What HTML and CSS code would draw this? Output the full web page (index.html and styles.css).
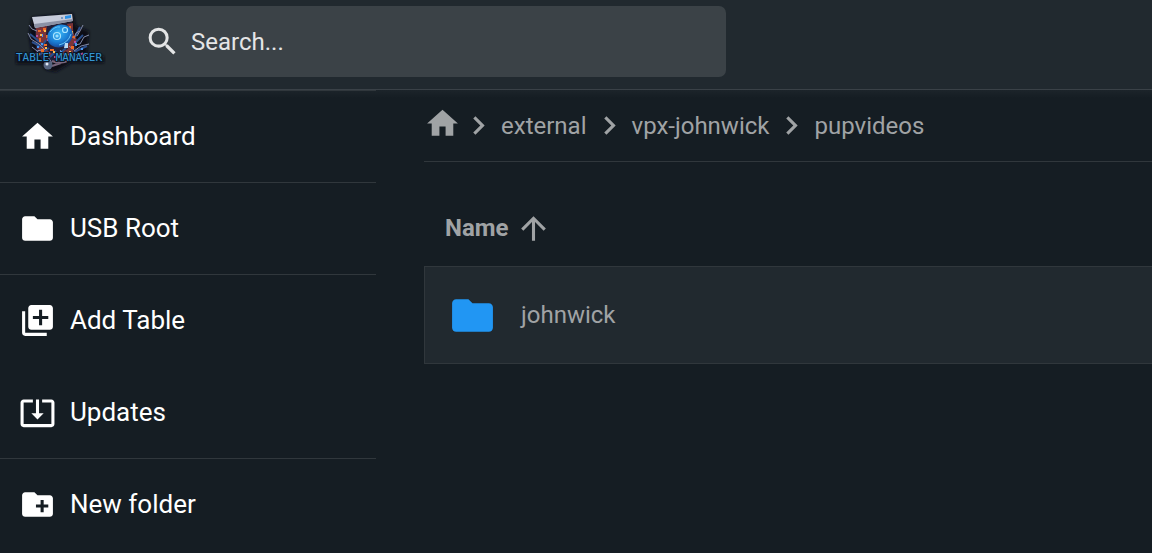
FILE: index.html
```html
<!DOCTYPE html>
<html lang="en">
<head>
<meta charset="utf-8">
<meta name="viewport" content="width=device-width, initial-scale=1">
<title>Table Manager</title>
<link rel="stylesheet" href="styles.css">
</head>
<body>
<header class="topbar">
  <a class="logo-link" href="#" aria-label="Table Manager">
    <svg class="logo" viewBox="0 0 92 64">
      <defs>
        <radialGradient id="ball" cx="50%" cy="35%" r="65%">
          <stop offset="0" stop-color="#38b4f4"/>
          <stop offset=".6" stop-color="#1b80d6"/>
          <stop offset="1" stop-color="#16479a"/>
        </radialGradient>
        <filter id="halo" x="-20%" y="-20%" width="140%" height="140%"><feGaussianBlur stdDeviation="1.5"/></filter>
      </defs>
      <path d="M18 7 59 3l3 13 13 5-2 25H0h90v7H57L42 62 32 60 27 54H2v-9h16l-3-20z" fill="#0b0e16" filter="url(#halo)"/>
      <path d="M21 17l37-5 5 30-7 8-26 2-8-10z" fill="#21203a"/>
      <path d="M22 18l11-2-1 9 3 4-6 5 5 7 6 4-9 1-8-8 3-5-4-6zM53 14l6-1v9l4 8-5 7 2 8-9 2-6-4 9-4-1-7 4-7z" fill="#7b3438"/>
      <g fill="none" stroke="#2b4e8b" stroke-width="2">
        <path d="M16 24l11 9M18 32l10 5M24 46l11-8M60 34l9-9M60 42l13-6M57 45l12 2M61 27l5-10M43 46l9-8M32 30l-5 8M36 47l6-6"/>
      </g>
      <g fill="none" stroke="#838aa8" stroke-width="1">
        <path d="M15 15l3 4 5 2M14 23l3 6 8 5 6 6M18 37l5 4 5-1M60 29l2-6 4-2 3-6M61 35l5-1 4-7 5-2M60 41l7-5 8-2M61 45l8-2 4 4M25 40l-6 6M66 21l-3 5M28 43l6 4 4 6M46 40l5 6 7-3M55 36l5 4"/>
      </g>
      <g fill="#ef6a25">
        <path d="M24 20h3v2h-3zM29 18h3v3h-3zM25 28h2v4h-2zM30 34h3v2h-3zM36 39h4v2h-4zM27 39h3v3h-3zM43 43h4v2h-4zM55 16h2v4h-2zM58 26h3v2h-3zM57 36h3v3h-3zM50 44h4v2h-4zM32 25h2v3h-2zM22 43h4v2h-4zM33 44h3v2h-3z"/>
      </g>
      <g fill="#ffc14e"><path d="M30 20h2v2h-2zM26 24h2v2h-2zM31 37h2v2h-2zM39 41h2v2h-2zM55 41h2v2h-2zM58 21h1v3h-1zM45 45h2v1h-2z"/></g>
      <g fill="#4b98ef"><path d="M27 33h2v2h-2zM23 36h2v2h-2zM34 42h2v2h-2zM61 33h2v3h-2zM52 48h2v2h-2zM46 41h2v2h-2zM28 24h1v3h-1zM67 38h2v2h-2z"/></g>
      <g fill="#b44d9c"><path d="M22 25h2v2h-2zM33 29h2v2h-2zM40 46h3v2h-3zM60 31h2v2h-2zM66 43h3v2h-3zM29 46h2v2h-2z"/></g>
      <path d="M18 7 58 4l1 7-38 7z" fill="#c6cbda"/>
      <path d="M20 14 59 9v2l-38 7z" fill="#8b91a5"/>
      <path d="M51 6l6-1v3l-6 1z" fill="#2d91e6"/>
      <circle cx="48" cy="8" r="1" fill="#5c87bd"/>
      <ellipse cx="46" cy="26" rx="13" ry="11" fill="url(#ball)" transform="rotate(-25 46 26)"/>
      <g fill="none" stroke="#a9e5ff" stroke-width="1.200"><circle cx="43" cy="26" r="3.500"/><circle cx="43" cy="26" r="1"/><circle cx="51" cy="20" r="2.500"/></g>
      <path d="M36 22q5-6 10-5M45 35q9-2 12-11" fill="none" stroke="#65c9fa"/>
      <path d="M51 33h3v5h-4z" fill="#bad9f5"/>
      <path d="M38 51q9 4 18-1M38 56l9-3" fill="none" stroke="#78657b" stroke-width="2"/>
      <circle cx="34" cy="55" r="4.500" fill="#56647f"/>
      <circle cx="33" cy="54" r="1.500" fill="#e0e9f7"/>
      <text class="logo-text" x="2" y="51">TABLE MANAGER</text>
    </svg>
  </a>
  <label class="search">
    <svg class="icon" viewBox="0 0 24 24" aria-hidden="true"><path d="M15.500 14h-.79l-.28-.27A6.471 6.471 0 0 0 16 9.500 6.500 6.500 0 1 0 9.500 16c1.610 0 3.090-.59 4.230-1.570l.27.28v.79l5 4.990L20.490 19l-4.990-5zm-6 0C7.010 14 5 11.990 5 9.500S7.010 5 9.500 5 14 7.010 14 9.500 11.990 14 9.500 14z"/></svg>
    <input class="search-input" type="text" placeholder="Search..." aria-label="Search">
  </label>
</header>
<div class="layout">
  <nav class="sidebar">
    <div class="group">
      <button class="action" type="button"><svg class="icon" viewBox="0 0 24 24" aria-hidden="true"><path d="M10 20v-6h4v6h5v-8h3L12 3 2 12h3v8z"/></svg><span>Dashboard</span></button>
    </div>
    <div class="group">
      <button class="action" type="button"><svg class="icon" viewBox="0 0 24 24" aria-hidden="true"><path d="M10 4H4c-1.100 0-1.990.9-1.990 2L2 18c0 1.100.9 2 2 2h16c1.100 0 2-.9 2-2V8c0-1.100-.9-2-2-2h-8z"/></svg><span>USB Root</span></button>
    </div>
    <div class="group">
      <button class="action" type="button"><svg class="icon" viewBox="0 0 24 24" aria-hidden="true"><path d="M4 6H2v14c0 1.100.9 2 2 2h14v-2H4zm16-4H8c-1.100 0-2 .9-2 2v12c0 1.100.9 2 2 2h12c1.100 0 2-.9 2-2V4c0-1.100-.9-2-2-2zm-1 9h-4v4h-2v-4H9V9h4V5h2v4h4z"/></svg><span>Add Table</span></button>
      <button class="action" type="button"><svg class="icon" viewBox="0 0 24 24" aria-hidden="true"><path d="M12 16.500l4-4h-3v-9h-2v9H8zm9-13h-6v1.990h6v14.030H3V5.490h6V3.500H3c-1.100 0-2 .9-2 2v14c0 1.100.9 2 2 2h18c1.100 0 2-.9 2-2v-14c0-1.100-.9-2-2-2z"/></svg><span>Updates</span></button>
    </div>
    <div class="group">
      <button class="action" type="button"><svg class="icon" viewBox="0 0 24 24" aria-hidden="true"><path d="M20 6h-8l-2-2H4c-1.110 0-1.990.89-1.990 2L2 18c0 1.110.89 2 2 2h16c1.110 0 2-.89 2-2V8c0-1.110-.89-2-2-2zm-1 8h-3v3h-2v-3h-3v-2h3V9h2v3h3z"/></svg><span>New folder</span></button>
    </div>
  </nav>
  <main class="content">
    <nav class="breadcrumbs" aria-label="Breadcrumbs">
      <a class="home" href="#" aria-label="Home"><svg class="icon" viewBox="0 0 24 24" aria-hidden="true"><path d="M10 20v-6h4v6h5v-8h3L12 3 2 12h3v8z"/></svg></a>
      <svg class="icon" viewBox="0 0 24 24" aria-hidden="true"><path d="M10 6L8.590 7.410 13.170 12l-4.580 4.590L10 18l6-6z"/></svg>
      <a class="crumb" href="#">external</a>
      <svg class="icon" viewBox="0 0 24 24" aria-hidden="true"><path d="M10 6L8.590 7.410 13.170 12l-4.580 4.590L10 18l6-6z"/></svg>
      <a class="crumb" href="#">vpx-johnwick</a>
      <svg class="icon" viewBox="0 0 24 24" aria-hidden="true"><path d="M10 6L8.590 7.410 13.170 12l-4.580 4.590L10 18l6-6z"/></svg>
      <a class="crumb" href="#">pupvideos</a>
    </nav>
    <table class="listing">
      <thead>
        <tr><th scope="col"><button class="sort" type="button">Name <svg class="icon" viewBox="0 0 24 24" aria-hidden="true"><path d="M4 12l1.410 1.410L11 7.830V20h2V7.830l5.580 5.590L20 12l-8-8z"/></svg></button></th></tr>
      </thead>
      <tbody>
        <tr><td><a class="item" href="#"><svg class="folder" viewBox="0 0 24 24" aria-hidden="true"><path d="M10 4H4c-1.100 0-1.990.9-1.990 2L2 18c0 1.100.9 2 2 2h16c1.100 0 2-.9 2-2V8c0-1.100-.9-2-2-2h-8z"/></svg><span>johnwick</span></a></td></tr>
      </tbody>
    </table>
  </main>
</div>
</body>
</html>
```

FILE: styles.css
```css
:root {
  --background: #151d23;
  --surface: #21292f;
  --surface-light: #3b4247;
  --divider: #30373c;
  --text: #a0a3a5;
}

* { box-sizing: border-box; }

body {
  margin: 0;
  min-height: 100vh;
  background: var(--background);
  color: var(--text);
  font-family: Roboto, "Liberation Sans", sans-serif;
  font-size: 24px;
  line-height: 32px;
  overflow-x: hidden;
}

a { color: inherit; text-decoration: none; }

button {
  border: 0;
  background: none;
  color: inherit;
  font: inherit;
  cursor: pointer;
}

.icon {
  flex: none;
  width: 37px;
  height: 37px;
  fill: currentColor;
}

.topbar {
  display: flex;
  align-items: center;
  gap: 20px;
  height: 90px;
  padding: 0 16px 6px 14px;
  background: var(--surface);
  border-bottom: 1px solid #3a4147;
}

.logo-link { flex: none; }

.logo {
  display: block;
  width: 92px;
  height: 64px;
}

.logo-text {
  font: 11px "DejaVu Sans Mono", monospace;
  fill: #3596d4;
  stroke: #0a1626;
  stroke-width: 2px;
  paint-order: stroke;
}

.search {
  display: flex;
  align-items: center;
  gap: 10px;
  flex: 0 1 600px;
  height: 71px;
  padding: 0 18px;
  border-radius: 7px;
  background: var(--surface-light);
  color: #e4e5e6;
}

.search-input {
  flex: 1;
  min-width: 0;
  padding: 0;
  border: 0;
  outline: 0;
  background: none;
  color: inherit;
  font: inherit;
}

.search-input::placeholder { color: inherit; opacity: 1; }

.layout {
  display: flex;
  gap: 48px;
  background: linear-gradient(#1c242a, var(--background) 8px);
}

.sidebar { flex: 0 0 376px; }

.group {
  display: flex;
  flex-direction: column;
  gap: 1px;
  border-top: 1px solid var(--divider);
}

.action {
  display: flex;
  align-items: center;
  gap: 14px;
  height: 91px;
  padding: 0 19px 1px;
  color: #fff;
  font-size: 26px;
  text-align: left;
}

.content { flex: 1; min-width: 0; }

.breadcrumbs {
  display: flex;
  align-items: center;
  gap: 4px;
  height: 72px;
  border-bottom: 1px solid var(--divider);
}

.home {
  display: flex;
  margin-right: -5px;
  padding-bottom: 5px;
}

.listing {
  width: 100%;
  margin-top: 28px;
  border-collapse: separate;
  border-spacing: 0;
}

.listing th {
  height: 76px;
  padding: 0 21px;
  text-align: left;
}

.sort {
  display: flex;
  align-items: center;
  gap: 6px;
  padding: 0;
  font-weight: bold;
}

.listing td {
  padding: 0;
  border: 1px solid var(--divider);
  border-right: 0;
  background: var(--surface);
}

.item {
  display: flex;
  align-items: center;
  gap: 24px;
  height: 96px;
  padding: 0 23px;
}

.folder {
  flex: none;
  width: 49px;
  height: 49px;
  fill: #2196f3;
}
```
